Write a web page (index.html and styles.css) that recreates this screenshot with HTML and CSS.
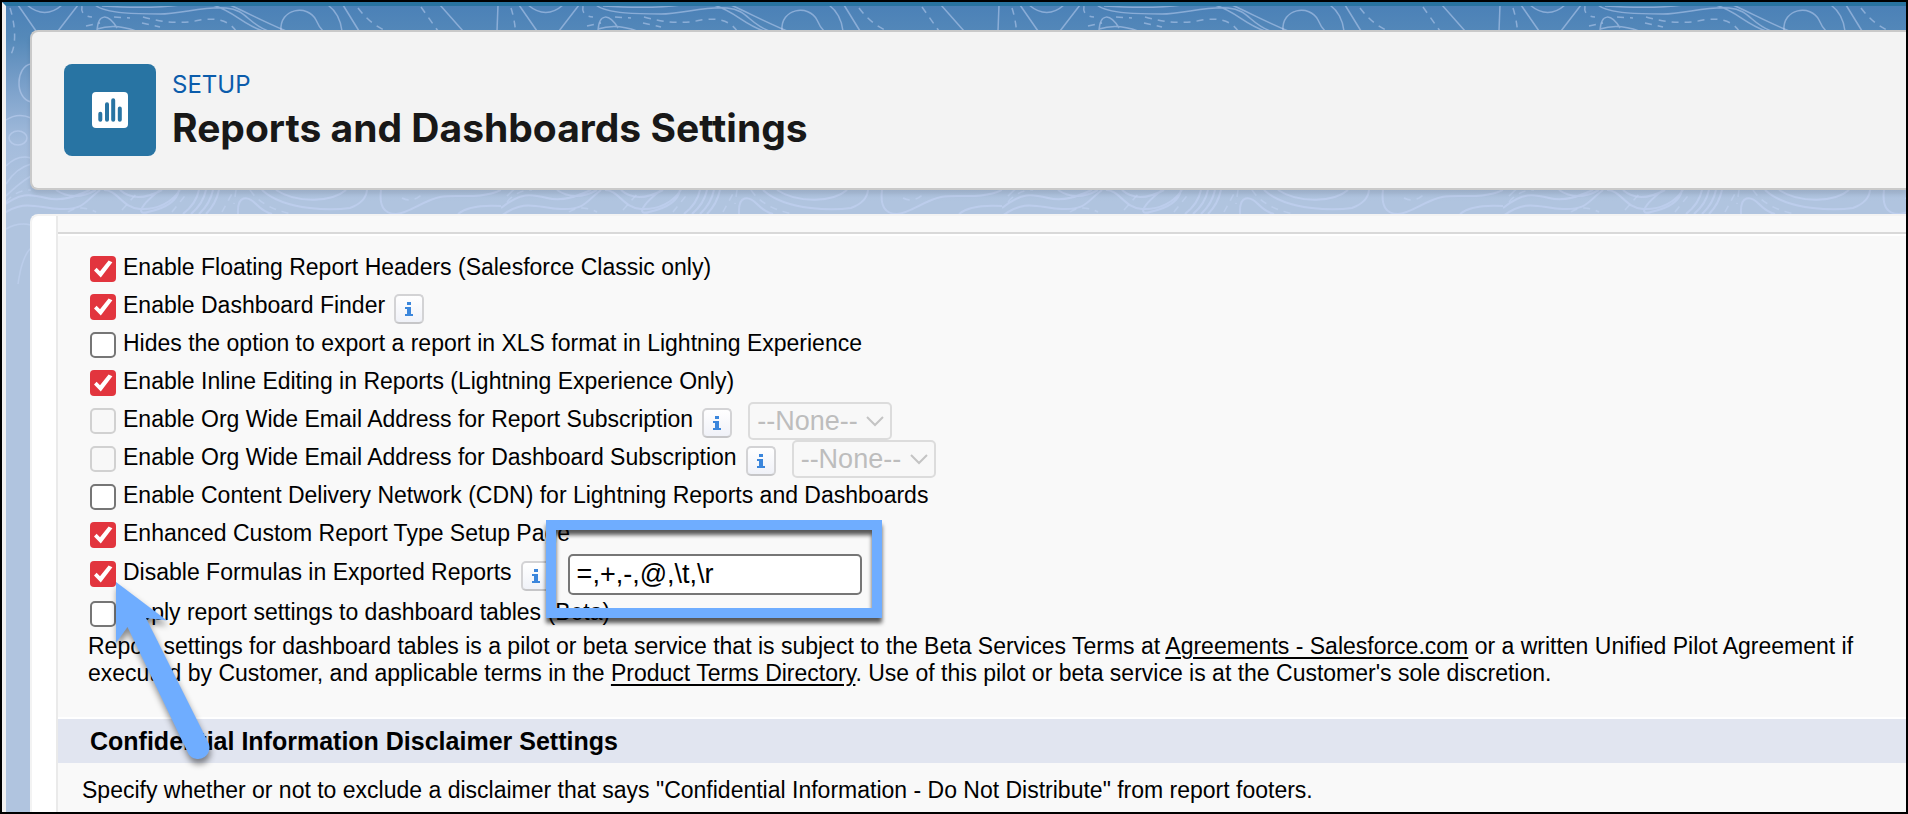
FILE: index.html
```html
<!DOCTYPE html>
<html lang="en">
<head>
<meta charset="utf-8">
<title>Reports and Dashboards Settings</title>
<link rel="stylesheet" href="styles.css">
</head>
<body>
<div class="frame">
  <svg class="topo" aria-hidden="true">
    <defs>
      <pattern id="contours" width="501" height="300" patternUnits="userSpaceOnUse" patternTransform="translate(-2 -2)">
        <g fill="none" stroke="#c6d6f5" stroke-opacity=".5" stroke-width="1.500">
          <path d="M18 5L36 31M27 5Q45 20 62 5M78 5L58 31M498 5L497 31M440 5L463 31"/>
          <path d="M95 5C106 14 140 14 160 14S205 6 226 8S246 22 268 31M102 6Q150 9 180 5M213 5C235 12 242 24 263 31M230 5C250 14 260 20 286 31"/>
          <path d="M97 31C98 13 108 13 117 28M97 29Q115 23 136 31M281 31C279 8 308 4 316 20Q319 27 323 31M328 5Q340 14 342 31M343 5L359 31"/>
          <path d="M31 64C16 66 14 98 31 102M9 138a9 7 0 1 0 18 0a9 7 0 1 0-18 0M6 120Q18 112 31 118M6 166Q18 154 31 158M6 184Q16 168 31 164M6 196Q18 184 31 176M6 229Q18 222 31 225M18 284Q22 256 31 248"/>
        </g>
        <g fill="none" stroke="#bfcfef" stroke-opacity=".8" stroke-width="2">
          <path d="M0 208C20 192 30 194 46 198S76 196 90 190M0 216C24 198 36 208 60 209S84 202 100 190M56 190Q74 202 96 190"/>
          <path d="M104 190C118 190 122 208 140 209S172 202 180 190M120 190Q136 204 162 190M160 190Q142 204 141 211Q142 214 148 212Q176 206 179 190"/>
          <path d="M183 214Q196 204 199 190M191 214Q203 204 206 190M199 214Q210 204 213 190M206 214Q216 204 219 190"/>
          <path d="M238 214C237 194 248 196 256 204Q264 212 272 214M276 190C298 204 332 202 346 190M262 190C286 212 336 210 350 208Q366 202 367 190M381 190C379 206 384 214 396 214S424 200 440 197S480 200 501 190M458 214Q470 204 501 206"/>
        </g>
        <g fill="none" stroke="#c6d6f5" stroke-opacity=".5" stroke-width="1.500" stroke-dasharray="7 6">
          <path d="M10 8C14 20 18 44 10 56M82 6Q80 16 92 17M86 26L100 23M114 17L130 18M143 17Q175 26 200 20Q226 16 236 31M142 23L160 27M358 8Q370 24 386 31M421 7L438 31"/>
          <path d="M68 212Q80 204 96 212M122 210L138 192M172 212L188 192M222 212L234 190M236 190L234 204M250 190Q262 208 292 214M402 198Q414 204 424 192M6 202Q16 190 31 190"/>
        </g>
      </pattern>
    </defs>
    <rect width="100%" height="298" fill="url(#contours)"/>
  </svg>
  <header class="page-header">
    <span class="page-icon">
      <svg viewBox="0 0 36 36" width="36" height="36" aria-hidden="true">
        <rect width="36" height="36" rx="4" fill="#fff"/>
        <path d="M8.300 21.800v6M15 12.200v15.600M21.200 8.300v19.500M27.800 16.600v11.200" stroke="#2874a3" stroke-width="4" stroke-linecap="round"/>
      </svg>
    </span>
    <div>
      <p class="eyebrow">SETUP</p>
      <h1 class="title">Reports and Dashboards Settings</h1>
    </div>
  </header>
  <main class="panel">
    <div class="content">
      <div class="rule"></div>
      <svg class="symbols" aria-hidden="true">
        <symbol id="tick" viewBox="0 0 26 26"><path d="M4 14.500L6.600 11.800L10 15.200L18.600 4.600L22.400 6.200L10.800 21.400Z"/></symbol>
        <symbol id="info" viewBox="0 0 12 16"><path d="M4 1h4v3H4zM2 6h6v7h2v2H2v-2h2V8H2z"/></symbol>
        <symbol id="chevron" viewBox="0 0 18 11"><path d="M1 1l8 8 8-8"/></symbol>
      </svg>
      <form class="settings">
        <div class="row"><span class="box"><input class="check" type="checkbox" id="c1" checked><svg class="tick"><use href="#tick"/></svg></span><label for="c1">Enable Floating Report Headers (Salesforce Classic only)</label></div>
        <div class="row"><span class="box"><input class="check" type="checkbox" id="c2" checked><svg class="tick"><use href="#tick"/></svg></span><label for="c2">Enable Dashboard Finder</label><button class="info" type="button" aria-label="Info"><svg><use href="#info"/></svg></button></div>
        <div class="row"><span class="box"><input class="check" type="checkbox" id="c3"><svg class="tick"><use href="#tick"/></svg></span><label for="c3">Hides the option to export a report in XLS format in Lightning Experience</label></div>
        <div class="row"><span class="box"><input class="check" type="checkbox" id="c4" checked><svg class="tick"><use href="#tick"/></svg></span><label for="c4">Enable Inline Editing in Reports (Lightning Experience Only)</label></div>
        <div class="row"><span class="box"><input class="check" type="checkbox" id="c5" disabled><svg class="tick"><use href="#tick"/></svg></span><label for="c5">Enable Org Wide Email Address for Report Subscription</label><button class="info" type="button" aria-label="Info"><svg><use href="#info"/></svg></button>
          <span class="picker"><select class="select" disabled aria-label="Report subscription address"><option>--None--</option></select><svg class="chevron"><use href="#chevron"/></svg></span></div>
        <div class="row"><span class="box"><input class="check" type="checkbox" id="c6" disabled><svg class="tick"><use href="#tick"/></svg></span><label for="c6">Enable Org Wide Email Address for Dashboard Subscription</label><button class="info" type="button" aria-label="Info"><svg><use href="#info"/></svg></button>
          <span class="picker"><select class="select" disabled aria-label="Dashboard subscription address"><option>--None--</option></select><svg class="chevron"><use href="#chevron"/></svg></span></div>
        <div class="row"><span class="box"><input class="check" type="checkbox" id="c7"><svg class="tick"><use href="#tick"/></svg></span><label for="c7">Enable Content Delivery Network (CDN) for Lightning Reports and Dashboards</label></div>
        <div class="row"><span class="box"><input class="check" type="checkbox" id="c8" checked><svg class="tick"><use href="#tick"/></svg></span><label for="c8">Enhanced Custom Report Type Setup Page</label></div>
        <div class="row row-tall"><span class="box"><input class="check" type="checkbox" id="c9" checked><svg class="tick"><use href="#tick"/></svg>
            <svg class="arrow" viewBox="0 0 110 200" aria-hidden="true"><path d="M6 4L57 42.500L36 40L97.500 163A10 10 0 0 1 78.500 176L17.500 49L6 65Z"/></svg></span><label for="c9">Disable Formulas in Exported Reports</label><button class="info" type="button" aria-label="Info"><svg><use href="#info"/></svg></button>
          <span class="callout"><input class="field" type="text" value="=,+,-,@,\t,\r" aria-label="Disabled formula characters"></span></div>
        <div class="row row-tall"><span class="box"><input class="check" type="checkbox" id="c10"><svg class="tick"><use href="#tick"/></svg></span><label for="c10">Apply report settings to dashboard tables (Beta)</label></div>
        <p class="note">Report settings for dashboard tables is a pilot or beta service that is subject to the Beta Services Terms at <a href="#">Agreements - Salesforce.com</a> or a written Unified Pilot Agreement if executed by Customer, and applicable terms in the <a href="#">Product Terms Directory</a>. Use of this pilot or beta service is at the Customer's sole discretion.</p>
      </form>
      <h2 class="section">Confidential Information Disclaimer Settings</h2>
      <p class="lead">Specify whether or not to exclude a disclaimer that says "Confidential Information - Do Not Distribute" from report footers.</p>
    </div>
  </main>
</div>
</body>
</html>
```

FILE: styles.css
```css
* { box-sizing: border-box; }
body { margin: 0; background: #000; font: 23px/27px "Liberation Sans", Arial, sans-serif; color: #000; }
h1, h2, p { margin: 0; }

.frame {
  position: relative;
  display: flex;
  flex-direction: column;
  gap: 24px;
  height: 100vh;
  padding: 28px 0 0 28px;
  overflow: hidden;
  border: 2px solid #000;
  background: linear-gradient(#4a80b7 0, #5589b9 36px, #7fa3cc 90px, #a4bcdc 140px, #b0c4df 200px);
}
.frame::before {
  content: "";
  position: absolute;
  z-index: 1;
  inset: 0;
  border-top: 4px solid #2873a0;
  border-left: 4px solid #f1f1f1;
  pointer-events: none;
}
.topo { position: absolute; top: 0; left: 0; width: 100%; height: 298px; }

.page-header {
  position: relative;
  display: flex;
  gap: 16px;
  align-items: center;
  padding: 32px;
  border: 2px solid #c9c9c9;
  border-right: 0;
  border-radius: 8px 0 0 8px;
  background: #f3f3f3;
  box-shadow: 0 4px 4px rgba(0, 0, 0, .1);
}
.page-icon { display: grid; place-items: center; width: 92px; height: 92px; border-radius: 8px; background: #2874a3; }
.eyebrow { font: 24px/36px Inter, sans-serif; color: #0b5cab; }
.title { font: 700 39px/50px Inter, sans-serif; color: #181818; }

.panel {
  position: relative;
  flex: 1;
  min-height: 0;
  padding-left: 24px;
  border: solid #f3f3f3;
  border-width: 2px 0 0 2px;
  border-radius: 8px 0 0 0;
  background: #fff;
}
.content { min-height: 100%; border-left: 2px solid #eaeaea; background: #f9f9f9; }
.rule { height: 18px; border-bottom: 2px solid #d9d9d9; box-shadow: 0 2px #fff; }
.symbols { display: block; width: 0; height: 0; }
.settings { padding: 14px 40px 30px 30px; }
.row { display: flex; align-items: center; gap: 7px; height: 38px; padding-left: 2px; }
.row-tall { height: 40px; }

.box { position: relative; display: flex; flex: none; margin-top: 4px; }
.check {
  appearance: none;
  width: 26px;
  height: 26px;
  margin: 0;
  border: 2px solid #767676;
  border-radius: 5px;
  background: #fff;
}
.check:disabled { border-color: #d1d1d1; background: #f8f8f8; }
.check:checked { border: 0; border-radius: 4px; background: #e2353e; }
.tick { position: absolute; inset: 0; display: none; width: 26px; height: 26px; fill: #fff; pointer-events: none; }
.check:checked + .tick { display: block; }

.info {
  display: grid;
  place-items: center;
  flex: none;
  width: 30px;
  height: 30px;
  margin: 8px 0 0 2px;
  padding: 0;
  border: 2px solid #d3d3d5;
  border-bottom-color: #c6c6c8;
  border-radius: 5px;
  background: linear-gradient(#fff, #f0f2f8);
}
.info svg { width: 12px; height: 16px; fill: #3b86dc; }

.picker { position: relative; display: flex; margin: 4px 0 0 9px; }
.select {
  appearance: none;
  width: 144px;
  height: 38px;
  padding: 0 7px;
  border: 2px solid #dcdcdc;
  border-radius: 5px;
  background: #f8f8f8;
  font: 27px/34px "Liberation Sans", Arial, sans-serif;
  color: #bdbdbd;
  opacity: 1;
}
.chevron { position: absolute; right: 8px; top: 14px; width: 18px; height: 11px; fill: none; stroke: #c4c4c4; stroke-width: 2; pointer-events: none; }

.callout { position: relative; z-index: 1; display: flex; margin: 4px 0 0 10px; }
.callout::after {
  content: "";
  position: absolute;
  inset: -34px -20px -23px -22px;
  border: 10px solid #6fadff;
  filter: drop-shadow(0 5px 2px rgba(0, 0, 0, .65));
  pointer-events: none;
}
.field {
  width: 294px;
  height: 41px;
  padding: 0 7px;
  border: 2px solid #767676;
  border-radius: 5px;
  background: #fff;
  font: 27px/36px "Liberation Sans", Arial, sans-serif;
  color: #000;
}
.arrow {
  position: absolute;
  z-index: 2;
  left: 20px;
  top: 17px;
  width: 110px;
  height: 200px;
  fill: #6fadff;
  filter: drop-shadow(1px 5px 3px rgba(0, 0, 0, .45));
  pointer-events: none;
}

.note { padding-top: 1px; }
.note a { color: inherit; text-decoration-thickness: 2px; text-underline-offset: 3px; }
.section {
  height: 46px;
  padding: 0 32px;
  border-top: 2px solid #fff;
  background: #e1e5f0;
  font: 700 25px/44px "Liberation Sans", Arial, sans-serif;
}
.lead { padding: 14px 24px; }
```
